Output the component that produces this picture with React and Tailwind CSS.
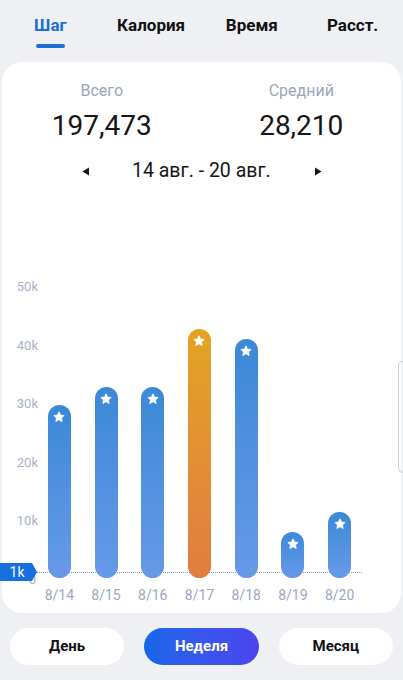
import React from 'react';

const bars = [
  { d: '8/14', h: 173 },
  { d: '8/15', h: 191 },
  { d: '8/16', h: 191 },
  { d: '8/17', h: 249, hot: true },
  { d: '8/18', h: 239 },
  { d: '8/19', h: 46 },
  { d: '8/20', h: 66 },
];

const yLabels = [
  { t: '50k', top: 'top-[9px]' },
  { t: '40k', top: 'top-[68px]' },
  { t: '30k', top: 'top-[126px]' },
  { t: '20k', top: 'top-[185px]' },
  { t: '10k', top: 'top-[243px]' },
];

function Star() {
  return (
    <svg width="12" height="12" viewBox="0 0 24 24" className="mt-[6px]">
      <path
        d="M12 1.5l3.1 6.6 7.2.9-5.3 5 1.4 7.1L12 17.6l-6.4 3.5 1.4-7.1-5.3-5 7.2-.9z"
        fill="#fff"
        stroke="#fff"
        strokeWidth="1.5"
        strokeLinejoin="round"
      />
    </svg>
  );
}

export default function App() {
  return (
    <div className="relative w-[403px] h-[680px] overflow-hidden bg-[#eef0f3] font-['Roboto',sans-serif]">
      {/* Tabs */}
      <div className="grid grid-cols-4 pt-[14px]">
        <div className="flex flex-col items-center">
          <span className="text-[17px] leading-[22px] font-bold text-[#1b6fd8]">Шаг</span>
          <div className="mt-[8px] h-[4px] w-[29px] rounded-full bg-[#1b6fd8]" />
        </div>
        <div className="flex flex-col items-center">
          <span className="text-[17px] leading-[22px] font-bold text-[#111]">Калория</span>
        </div>
        <div className="flex flex-col items-center">
          <span className="text-[17px] leading-[22px] font-bold text-[#111]">Время</span>
        </div>
        <div className="flex flex-col items-center">
          <span className="text-[17px] leading-[22px] font-bold text-[#111]">Расст.</span>
        </div>
      </div>

      {/* Card */}
      <div className="mt-[14px] mx-[2px] rounded-[20px] bg-white pt-[19px] pb-[3px] flex flex-col">
        <div className="grid grid-cols-2">
          <div className="flex flex-col items-center">
            <span className="text-[16px] leading-5 text-[#9aa6b8]">Всего</span>
            <span className="mt-[8px] text-[28px] leading-[34px] text-[#151515]">197,473</span>
          </div>
          <div className="flex flex-col items-center">
            <span className="text-[16px] leading-5 text-[#9aa6b8]">Средний</span>
            <span className="mt-[8px] text-[28px] leading-[34px] text-[#151515]">28,210</span>
          </div>
        </div>

        <div className="mt-[16px] flex items-center h-[24px]">
          <div className="w-[80px]" />
          <svg width="8" height="9" viewBox="0 0 8 9">
            <path d="M7 0.5v8L0.5 4.5z" fill="#151515" />
          </svg>
          <span className="ml-[42px] text-[19.5px] leading-6 text-[#151515]">14 авг. - 20 авг.</span>
          <svg width="8" height="9" viewBox="0 0 8 9" className="ml-[43px]">
            <path d="M1 0.5v8L7.5 4.5z" fill="#151515" />
          </svg>
        </div>

        {/* Chart */}
        <div className="relative mt-[87px] h-[340px] pb-[5px]">
          {yLabels.map((y) => (
            <span
              key={y.t}
              className={`absolute left-[12px] w-[24px] text-right text-[13px] leading-4 text-[#a7b2c6] ${y.top}`}
            >
              {y.t}
            </span>
          ))}
          <span className="absolute left-[12px] top-[302px] w-[22px] text-right text-[13px] leading-4 text-[#a7b2c6]">0</span>

          <div className="absolute left-[34px] top-[302px] w-[326px] border-t border-dotted border-[#8d9dbd]" />

          <div className="absolute left-[-2px] top-[293px] z-20 flex items-center">
            <div className="h-[18px] w-[32px] bg-[#176fe0] flex items-center justify-center text-[14px] leading-none text-white pl-[2px]">
              1k
            </div>
            <svg width="5" height="18" viewBox="0 0 5 18">
              <path d="M0 0L5 9L0 18z" fill="#176fe0" />
            </svg>
          </div>

          <div className="relative z-10 ml-[34px] w-[327px] h-full grid grid-cols-7">
            {bars.map((b) => (
              <div key={b.d} className="flex flex-col items-center justify-end">
                <div
                  className={`w-[23px] rounded-full flex justify-center ${
                    b.hot
                      ? 'bg-gradient-to-b from-[#e3a322] to-[#e17c3f]'
                      : 'bg-gradient-to-b from-[#3a89d7] to-[#6699e8]'
                  }`}
                  style={{ height: b.h }}
                >
                  <Star />
                </div>
                <span className="mt-[7px] text-[14px] leading-5 text-[#9aa7bd]">{b.d}</span>
              </div>
            ))}
          </div>
        </div>
      </div>

      {/* Period buttons */}
      <div className="mt-[15px] px-[10px] flex gap-[20px]">
        <button className="flex-1 h-[37px] rounded-full bg-white text-[15px] font-bold text-[#111]">День</button>
        <button className="flex-1 h-[37px] rounded-full bg-gradient-to-r from-[#1366ea] to-[#4a44ef] text-[15px] font-bold text-white">
          Неделя
        </button>
        <button className="flex-1 h-[37px] rounded-full bg-white text-[15px] font-bold text-[#111]">Месяц</button>
      </div>

      {/* Side handle */}
      <div className="absolute right-0 top-[361px] h-[112px] w-[5px] rounded-l-[5px] border-l border-y border-[#c9cdd3]" />
    </div>
  );
}
